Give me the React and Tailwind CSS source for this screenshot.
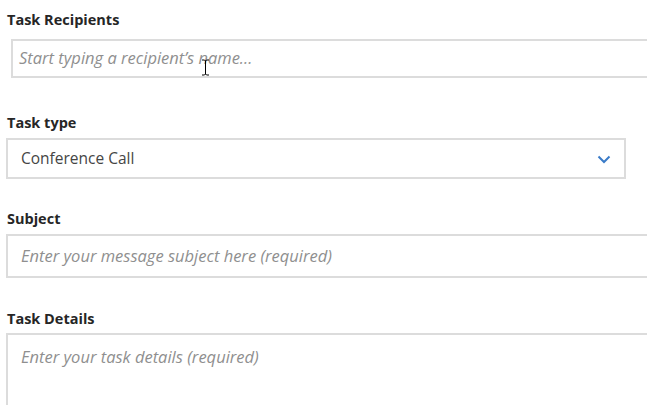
import React from "react";

const font = { fontFamily: '"Open Sans", "Noto Sans", sans-serif' };

export default function App() {
  return (
    <div className="relative w-[647px] h-[405px] overflow-hidden bg-white" style={font}>
      <div className="flex flex-col pl-[6px] w-[680px]">
        <div className="pt-[10px] pl-[1px] h-[39px] text-[14.5px] font-bold leading-[20px] text-[#262626]">Task Recipients</div>
        <div className="ml-[5px] h-[39px] border-2 border-[#dcdcdc] flex items-center px-[6px]">
          <span className="italic text-[16.5px] text-[#8f8f8f]">Start typing a recipient’s name...</span>
        </div>
        <div className="mt-[35px] pl-[1px] h-[25px] text-[14.5px] font-bold leading-[20px] text-[#262626]">Task type</div>
        <div className="w-[620px] h-[41px] border-2 border-[#dcdcdc] flex items-center justify-between pl-[13px] pr-[13px]">
          <span className="text-[15.5px] text-[#454545]">Conference Call</span>
          <svg width="14" height="9" viewBox="0 0 14 9" className="mt-[1px]">
            <path d="M1.5 1.5 L7 7 L12.5 1.5" fill="none" stroke="#3a7bc8" strokeWidth="2" />
          </svg>
        </div>
        <div className="mt-[30px] pl-[1px] h-[25px] text-[14.5px] font-bold leading-[20px] text-[#262626]">Subject</div>
        <div className="h-[44px] border-2 border-[#dcdcdc] flex items-center pl-[13px]">
          <span className="italic text-[16.5px] text-[#8f8f8f]">Enter your message subject here (required)</span>
        </div>
        <div className="mt-[31px] pl-[1px] h-[24px] text-[14.5px] font-bold leading-[20px] text-[#262626]">Task Details</div>
        <div className="h-[120px] border-2 border-[#dcdcdc] pl-[13px] pt-[10px]">
          <span className="italic text-[16.5px] text-[#8f8f8f]">Enter your task details (required)</span>
        </div>
      </div>
      <svg className="absolute left-[201px] top-[59px]" width="9" height="17" viewBox="0 0 9 17">
        <path d="M1 1 H3.5 L4.5 2 L5.5 1 H8 M4.5 2 V15 M1 16 H3.5 L4.5 15 L5.5 16 H8" fill="none" stroke="#000" strokeWidth="1" />
      </svg>
    </div>
  );
}
